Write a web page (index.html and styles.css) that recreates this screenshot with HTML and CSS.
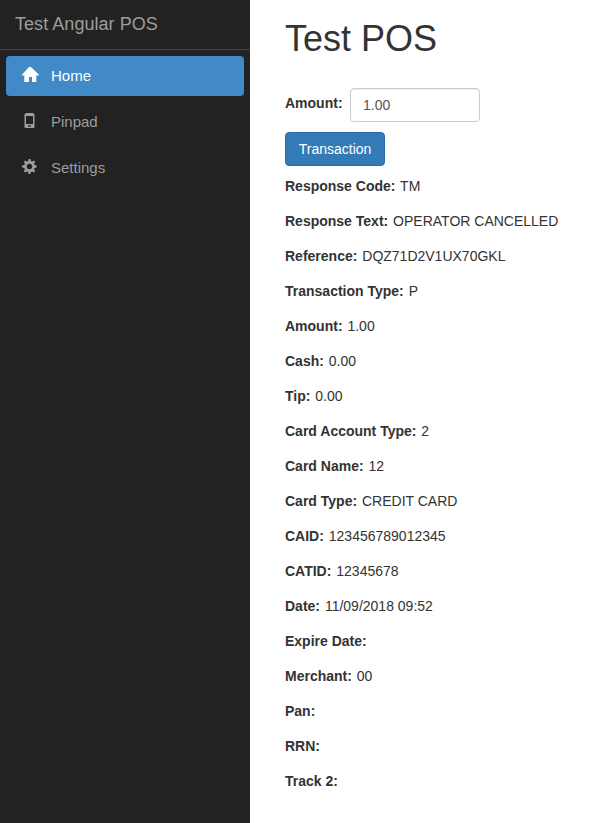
FILE: index.html
```
<!DOCTYPE html>
<html lang="en">
<head>
<meta charset="utf-8">
<title>Test POS</title>
<link rel="stylesheet" href="styles.css">
</head>
<body>
<div class="app">
  <nav class="sidebar">
    <a class="brand">Test Angular POS</a>
    <ul class="nav">
      <li><a class="nav-link active"><svg class="icon" viewBox="0 0 18 16"><path d="M8 0H10L18 7.7V8.5H15.3V15H11V10H8V15H3.3V8.5H1V7.7Z"/></svg><span>Home</span></a></li>
      <li><a class="nav-link"><svg class="icon" viewBox="0 0 18 16"><path fill-rule="evenodd" d="M5 0H12L13 1H13.5V14.3L12.8 15H4.2L3.5 14.3V1H4ZM5 3V11H12V3ZM7.2 12.2V13.8H9.8V12.2Z"/></svg><span>Pinpad</span></a></li>
      <li><a class="nav-link"><svg class="icon" viewBox="0 0 18 16"><path fill-rule="evenodd" d="M7.6 0H9.4L9.9 2.1 11.2 2.6 12.9 1.5 14.2 2.8 13.1 4.7 13.6 6 15.6 6.6V8.4L13.6 9 13.1 10.3 14.2 12.2 12.9 13.5 11.2 12.4 9.9 12.9 9.4 15H7.6L7.1 12.9 5.8 12.4 4.1 13.5 2.8 12.2 3.9 10.3 3.4 9 1 8.4V6.6L3.4 6 3.9 4.7 2.8 2.8 4.1 1.5 5.8 2.6 7.1 2.1ZM8.5 4.8A2.7 2.7 0 1 0 8.5 10.2A2.7 2.7 0 1 0 8.5 4.8Z"/></svg><span>Settings</span></a></li>
    </ul>
  </nav>
  <main class="content">
    <h1>Test POS</h1>
    <div class="amount"><label for="amount">Amount:</label><input id="amount" type="text" value="1.00"></div>
    <button class="button" type="button">Transaction</button>
    <div class="results">
      <p><b>Response Code:</b> TM</p>
      <p><b>Response Text:</b> OPERATOR CANCELLED</p>
      <p><b>Reference:</b> DQZ71D2V1UX70GKL</p>
      <p><b>Transaction Type:</b> P</p>
      <p><b>Amount:</b> 1.00</p>
      <p><b>Cash:</b> 0.00</p>
      <p><b>Tip:</b> 0.00</p>
      <p><b>Card Account Type:</b> 2</p>
      <p><b>Card Name:</b> 12</p>
      <p><b>Card Type:</b> CREDIT CARD</p>
      <p><b>CAID:</b> 123456789012345</p>
      <p><b>CATID:</b> 12345678</p>
      <p><b>Date:</b> 11/09/2018 09:52</p>
      <p><b>Expire Date:</b></p>
      <p><b>Merchant:</b> 00</p>
      <p><b>Pan:</b></p>
      <p><b>RRN:</b></p>
      <p><b>Track 2:</b></p>
    </div>
  </main>
</div>
</body>
</html>
```
FILE: styles.css
```
* { box-sizing: border-box; }
body { margin: 0; background: #fff; color: #333; font: 14px/20px "Liberation Sans", Arial, sans-serif; }
.app { display: flex; height: 823px; overflow: hidden; }
.sidebar { width: 250px; flex: none; background: #222; color: #9d9d9d; }
.brand { display: block; height: 50px; padding: 14px 15px; border-bottom: 1px solid #444; font-size: 18px; line-height: 20px; letter-spacing: .05px; }
.nav { list-style: none; margin: 0; padding: 6px; }
.nav li { margin-bottom: 6px; }
.nav-link { display: flex; align-items: center; height: 40px; padding-left: 15px; border-radius: 4px; font-size: 15px; }
.nav-link.active { background: #4189c7; color: #fff; }
.icon { width: 18px; height: 16px; margin-right: 12px; fill: currentColor; position: relative; top: -1px; }
.content { flex: 1; padding-left: 35px; }
h1 { margin: 19px 0 29px; font-size: 36px; line-height: 40px; font-weight: 400; }
.amount { display: flex; height: 34px; margin-bottom: 10px; }
.amount label { width: 65px; padding-top: 5px; font-weight: 700; }
.amount input { width: 130px; height: 34px; padding: 6px 12px; border: 1px solid #ccc; border-radius: 4px; color: #555; font: inherit; box-shadow: inset 0 1px 1px rgba(0,0,0,.075); }
.button { display: block; width: 100px; height: 34px; padding: 0; border: 1px solid #2e6da4; border-radius: 4px; background: #337ab7; color: #fff; font: inherit; }
.results { padding-top: 10px; }
.results p { margin: 0 0 15px; }
.results b { margin-right: 1px; }
```
